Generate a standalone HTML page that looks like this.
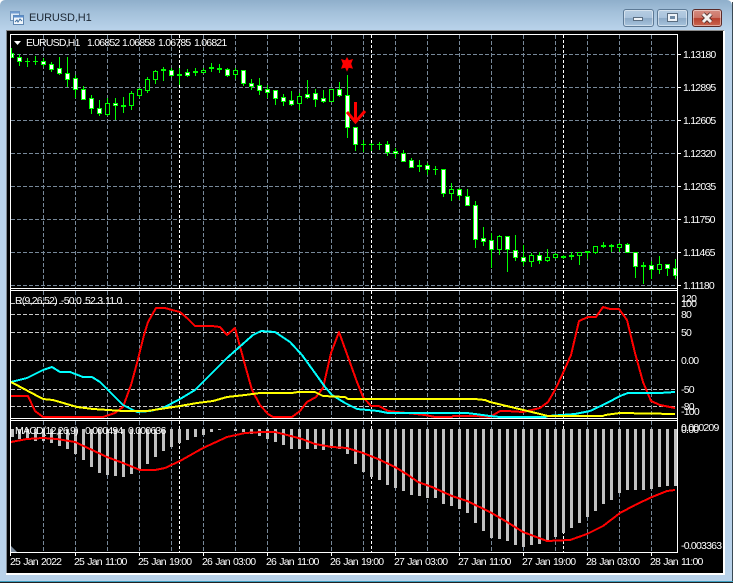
<!DOCTYPE html>
<html>
<head>
<meta charset="utf-8">
<title>EURUSD,H1</title>
<style>
html,body{margin:0;padding:0;background:#fff;}
body{width:735px;height:584px;overflow:hidden;position:relative;}
#win{position:absolute;left:0;top:0;width:732px;height:582px;border-radius:5px 5px 0 0;background:linear-gradient(#8fafcb 0,#a3c0da 12px,#b9d2ea 30px,#b9d2ea 100%);}
#edgeR{position:absolute;left:732px;top:2px;width:1px;height:580px;background:#3a4a55;}
#edgeB{position:absolute;left:0;top:581px;width:733px;height:1px;background:#3d9fc0;}
#edgeB2{position:absolute;left:0;top:582px;width:733px;height:1px;background:#222;}
#ttl{position:absolute;left:29px;top:11px;font:11px/14px "Liberation Sans",sans-serif;color:#1c2733;letter-spacing:-.1px;}
.btn{position:absolute;top:9px;height:16px;border:1px solid #5d7a96;border-radius:3px;box-shadow:inset 0 0 0 1px rgba(255,255,255,.45);background:linear-gradient(#b6cde2 0,#a9c3dc 48%,#8caac6 52%,#a8c4de 100%);}
#chart{position:absolute;left:0;top:0;}
</style>
</head>
<body>
<div id="win"></div>
<div id="edgeR"></div>
<div id="edgeB"></div>
<div id="edgeB2"></div>
<svg style="position:absolute;left:9px;top:10px" width="16" height="16" viewBox="0 0 16 16">
<rect x="1.5" y="1.5" width="9" height="9" fill="#dce9f6" stroke="#6f93b8"/>
<rect x="1.5" y="1.5" width="9" height="2" fill="#6f9bd0"/>
<rect x="4.5" y="5.5" width="10" height="9" fill="#f2f7fc" stroke="#5f86b0"/>
<rect x="4.5" y="5.5" width="10" height="2" fill="#5a8dcc"/>
<path d="M6 12l2-2 1 2 2-3 2 2" fill="none" stroke="#3f6f9f"/>
</svg>
<div id="ttl">EURUSD,H1</div>
<div class="btn" style="left:623px;width:29px;">
<div style="position:absolute;left:9px;top:7px;width:8px;height:2px;background:#eef3f8;border:1px solid #5a6d80;"></div>
</div>
<div class="btn" style="left:657px;width:29px;">
<div style="position:absolute;left:10px;top:4px;width:5px;height:3px;border:2px solid #eef3f8;outline:1px solid #5a6d80;background:#6f8aa5;"></div>
</div>
<div class="btn" style="left:692px;width:28px;border-color:#5a2a28;background:linear-gradient(#d68c80 0,#cc7466 48%,#b8402e 52%,#c96650 100%);">
<svg width="28" height="16" style="position:absolute;left:0;top:0"><path d="M10 4l8 8M18 4l-8 8" stroke="#4a2a28" stroke-width="4.5"/><path d="M10 4l8 8M18 4l-8 8" stroke="#f4f0ee" stroke-width="3"/></svg>
</div>

<svg id="chart" width="735" height="584" viewBox="0 0 735 584" xmlns="http://www.w3.org/2000/svg">
<rect x="6" y="30" width="718" height="544" fill="#000"/>
<path d="M6 30.5H724" stroke="#8a8a8a" fill="none"/>
<path d="M6.5 30V574" stroke="#808890" fill="none"/>
<rect x="723" y="31" width="2" height="544" fill="#fff"/>
<rect x="6" y="573" width="719" height="2" fill="#fff"/>

<g fill="none" shape-rendering="crispEdges">
<!-- vertical grid -->
<path stroke="#778899" stroke-dasharray="4 2" d="M43.5 35V288M75.5 35V288M107.5 35V288M139.5 35V288M171.5 35V288M203.5 35V288M235.5 35V288M267.5 35V288M299.5 35V288M331.5 35V288M363.5 35V288M395.5 35V288M427.5 35V288M459.5 35V288M491.5 35V288M523.5 35V288M555.5 35V288M587.5 35V288M619.5 35V288M651.5 35V288
M43.5 291V418M75.5 291V418M107.5 291V418M139.5 291V418M171.5 291V418M203.5 291V418M235.5 291V418M267.5 291V418M299.5 291V418M331.5 291V418M363.5 291V418M395.5 291V418M427.5 291V418M459.5 291V418M491.5 291V418M523.5 291V418M555.5 291V418M587.5 291V418M619.5 291V418M651.5 291V418
M43.5 421V552M75.5 421V552M107.5 421V552M139.5 421V552M171.5 421V552M203.5 421V552M235.5 421V552M267.5 421V552M299.5 421V552M331.5 421V552M363.5 421V552M395.5 421V552M427.5 421V552M459.5 421V552M491.5 421V552M523.5 421V552M555.5 421V552M587.5 421V552M619.5 421V552M651.5 421V552"/>
<!-- horizontal grid main -->
<path stroke="#778899" stroke-dasharray="4 2" d="M11 54.5H677M11 87.5H677M11 120.5H677M11 153.5H677M11 186.5H677M11 219.5H677M11 252.5H677M11 285.5H677"/>
<!-- horizontal levels rsi -->
<path stroke="#c8c8c8" stroke-dasharray="4 2" d="M11 303.5H677M11 314.5H677M11 332.5H677M11 360.5H677M11 389.5H677M11 406.5H677"/>
<!-- period separators -->
<path stroke="#fff" stroke-dasharray="3 2" d="M179.5 35V288M371.5 35V288M563.5 35V288M179.5 291V418M371.5 291V418M563.5 291V418M179.5 421V552M371.5 421V552M563.5 421V552"/>

<!-- macd bars -->
<path stroke="#c0c0c0" stroke-width="3" d="M12.5 429V437M19.5 429V439M27.5 429V440M35.5 429V441M43.5 429V441M51.5 429V443M59.5 429V446M67.5 429V449M75.5 429V454M83.5 429V460M91.5 429V467M99.5 429V473M107.5 429V475M115.5 429V476M123.5 429V477M131.5 429V474M139.5 429V469M147.5 429V464M155.5 429V457M163.5 429V451M171.5 429V447M179.5 429V443M187.5 429V440M195.5 429V437M203.5 429V435M211.5 429V432M219.5 429V430M235.5 429V431M243.5 429V432M251.5 429V434M259.5 429V436M267.5 429V439M275.5 429V442M283.5 429V445M291.5 429V449M299.5 429V449M307.5 429V449M315.5 429V449M323.5 429V450M331.5 429V448M339.5 429V449M347.5 429V454M355.5 429V464M363.5 429V472M371.5 429V477M379.5 429V480M387.5 429V485M395.5 429V488M403.5 429V491M411.5 429V495M419.5 429V496M427.5 429V498M435.5 429V498M443.5 429V504M451.5 429V506M459.5 429V509M467.5 429V513M475.5 429V523M483.5 429V531M491.5 429V538M499.5 429V539M507.5 429V541M515.5 429V545M523.5 429V547M531.5 429V545M539.5 429V544M547.5 429V541M555.5 429V537M563.5 429V533M571.5 429V528M579.5 429V523M587.5 429V517M595.5 429V511M603.5 429V504M611.5 429V500M619.5 429V493M627.5 429V490M635.5 429V490M643.5 429V490M651.5 429V489M659.5 429V487M667.5 429V486M675.5 429V486"/>

<!-- candles -->
<path stroke="#00ff00" d="M11.5 48V58M19.5 54V66M27.5 58V67M35.5 56V65M43.5 58V67M51.5 62V72M59.5 57V75M67.5 57V87M75.5 75V98M83.5 86V100M91.5 95V114M99.5 100V116M107.5 98V116M115.5 98V120M123.5 97V113M131.5 91V110M139.5 88V98M147.5 77V93M155.5 70V84M163.5 67V81M171.5 68V77M179.5 68V85M187.5 69V77M195.5 68V76M203.5 68V73M211.5 63V72M219.5 64V73M227.5 68V77M235.5 68V79M243.5 70V86M251.5 79V90M259.5 78V95M267.5 85V98M275.5 90V105M283.5 94V106M291.5 91V106M299.5 93V110M307.5 80V99M315.5 89V107M323.5 90V103M331.5 89V102M339.5 82V97M347.5 75V138M355.5 127V151M363.5 140V152M371.5 143V151M379.5 142V150M387.5 141V156M395.5 148V158M403.5 150V162M411.5 158V168M419.5 160V172M427.5 163V175M435.5 166V175M443.5 169V197M451.5 183V201M459.5 188V200M467.5 189V206M475.5 201V248M483.5 227V246M491.5 233V268M499.5 235V255M507.5 236V272M515.5 235V261M523.5 245V266M531.5 253V267M539.5 252V264M547.5 249V262M555.5 253V259M563.5 255V259M571.5 252V260M579.5 252V265M587.5 251V259M595.5 246V254M603.5 242V248M611.5 244V252M619.5 243V252M627.5 243V253M635.5 252V278M643.5 262V284M651.5 261V279M659.5 256V274M667.5 264V276M675.5 259V279
M25 61.5h5M33 61.5h5M361 144.5h5M369 144.5h5M377 144.5h5M433 169.5h5"/>
<path stroke="#00ff00" stroke-width="2" d="M121 106h5M161 70h5M177 75h5M193 72h5M209 68h5M217 69h5M417 166h5M561 257h5M569 256h5M585 252h5M601 246h5M609 246h5M641 266h5"/>
<path stroke="#00ff00" fill="#fff" d="M11.500 53.500h2v4h-2zM17.500 57.500h4v4h-4zM41.500 61.500h4v3h-4zM49.500 64.500h4v5h-4zM57.500 68.500h4v5h-4zM65.500 73.500h4v6h-4zM73.500 78.500h4v11h-4zM81.500 89.500h4v10h-4zM89.500 98.500h4v10h-4zM97.500 108.500h4v5h-4zM113.500 103.500h4v2h-4zM169.500 70.500h4v5h-4zM185.500 72.500h4v3h-4zM225.500 69.500h4v6h-4zM241.500 70.500h4v13h-4zM249.500 83.500h4v3h-4zM257.500 85.500h4v5h-4zM265.500 89.500h4v3h-4zM273.500 90.500h4v8h-4zM281.500 97.500h4v4h-4zM289.500 100.500h4v4h-4zM305.500 94.500h4v3h-4zM313.500 93.500h4v6h-4zM321.500 98.500h4v3h-4zM337.500 89.500h4v6h-4zM345.500 95.500h4v32h-4zM353.500 127.500h4v17h-4zM385.500 144.500h4v8h-4zM393.500 151.500h4v2h-4zM401.500 153.500h4v8h-4zM409.500 160.500h4v7h-4zM425.500 165.500h4v4h-4zM441.500 169.500h4v24h-4zM457.500 189.500h4v6h-4zM465.500 196.500h4v9h-4zM473.500 205.500h4v34h-4zM481.500 238.500h4v3h-4zM489.500 240.500h4v9h-4zM505.500 236.500h4v13h-4zM513.500 250.500h4v7h-4zM521.500 257.500h4v4h-4zM537.500 255.500h4v5h-4zM625.500 244.500h4v8h-4zM633.500 252.500h4v14h-4zM649.500 265.500h4v4h-4zM665.500 264.500h4v4h-4zM673.500 268.500h3v7h-3z"/>
<path stroke="#00ff00" fill="#000" d="M105.500 103.500h4v11h-4zM129.500 93.500h4v12h-4zM137.500 89.500h4v6h-4zM145.500 79.500h4v11h-4zM153.500 71.500h4v8h-4zM201.500 70.500h4v2h-4zM233.500 70.500h4v4h-4zM297.500 96.500h4v7h-4zM329.500 89.500h4v12h-4zM449.500 189.500h4v4h-4zM497.500 236.500h4v13h-4zM529.500 255.500h4v6h-4zM545.500 257.500h4v3h-4zM553.500 254.500h4v3h-4zM577.500 252.500h4v3h-4zM593.500 246.500h4v6h-4zM617.500 244.500h4v3h-4zM657.500 264.500h4v5h-4z"/>

<!-- rsi lines -->
<g stroke-width="2" stroke-linejoin="round">
<polyline stroke="#ff0000" points="11,396 28,396 35,411 43,417 103,417 115,413 123,407 131,385 137,363 144,335 148,322 156,308 165,308 172,310 180,312 187,318 195,326 212,326 220,327 227,335 235,328 245,365 252,390 260,405 268,414 273,417 292,417 300,411 307,402 316,397 323,388 331,353 339,332 348,357 357,382 363,397 371,406 379,406 388,411 425,415 435,417 452,417 453,416 475,416 490,417 500,411 507,411 523,412 540,408 548,402 555,390 563,373 571,355 579,321 588,317 596,317 603,307 610,309 619,309 627,320 635,353 643,382 651,401 660,405 675,408"/>
<polyline stroke="#00ffff" points="11,382 27,378 43,370 52,367 60,372 70,372 83,377 92,377 100,382 108,390 123,405 137,412 150,411 163,408 180,399 195,390 210,375 227,358 245,342 253,335 261,331 275,332 290,342 302,355 315,373 325,387 332,395 345,403 357,409 378,411 388,413 467,413 475,414 490,416 500,417 545,417 548,416 575,414 590,411 607,403 620,396 628,393 660,393 675,392"/>
<polyline stroke="#ffff00" points="11,382 43,399 53,400 77,407 93,409 123,411 147,411 180,406 197,403 213,401 227,397 245,395 260,393 292,393 298,392 315,392 323,396 345,397 348,399 475,399 485,400 490,402 540,414 548,416 603,416 605,415 620,413 675,414"/>
<!-- macd signal -->
<polyline stroke="#ff0000" points="11,442 27,439 43,438 57,439 75,442 90,449 107,457 123,463 140,470 155,470 165,468 180,461 203,448 227,437 245,433 262,432 275,432 287,435 302,439 315,444 332,447 347,448 363,453 378,459 395,467 408,475 418,482 432,487 452,496 467,501 490,512 507,522 523,532 547,541 570,540 587,534 603,526 620,513 635,505 652,497 667,491 675,490"/>
</g>

<!-- frames -->
<path stroke="#fff" d="M10.500 34.500H677.500V552.500H10.500ZM10.500 288.500H677.500M10.500 290.500H677.500M10.500 418.500H677.500M10.500 420.500H677.500"/>
<!-- ticks -->
<path stroke="#fff" d="M678 54.500h3M678 87.500h3M678 120.500h3M678 153.500h3M678 186.500h3M678 219.500h3M678 252.500h3M678 285.500h3M75.500 553v3M139.500 553v3M203.500 553v3M267.500 553v3M331.500 553v3M395.500 553v3M459.500 553v3M523.500 553v3M587.500 553v3M651.500 553v3M10.500 553v3"/>
</g>

<!-- objects -->
<path fill="#778899" d="M11 546l6 6h-6z"/>
<path fill="#fff" d="M14 41h7l-3.500 4z"/>
<path fill="#ff0000" d="M347 57l1.800 3.200 4.200-1.200-1.800 4.800 1.800 5-4.200-1-1.800 4-1.800-4-4.200 1 1.800-5-1.800-4.800 4.200 1.200z"/>
<g fill="none" stroke="#ff0000" stroke-width="3">
<path d="M355.500 102V121"/>
<path d="M347 112L355.500 122L365 111"/>
</g>

<!-- text -->
<g font-family="'Liberation Sans',sans-serif" font-size="10.500" fill="#fff" style="letter-spacing:-.78px;word-spacing:1px">
<text x="26" y="46">EURUSD,H1</text>
<text x="87" y="46">1.06852</text>
<text x="122" y="46">1.06858</text>
<text x="158" y="46">1.06785</text>
<text x="194" y="46">1.06821</text>
<text x="15" y="304">R(9,26,52)</text>
<text x="61" y="304">-50.0</text>
<text x="85" y="304">52.3</text>
<text x="105" y="304">11.0</text>
<text x="15" y="434">MACD(12,26,9)</text>
<text x="85" y="434">0.000494</text>
<text x="128" y="434">0.000636</text>
<text x="683" y="58">1.13180</text>
<text x="683" y="91">1.12895</text>
<text x="683" y="124">1.12605</text>
<text x="683" y="157">1.12320</text>
<text x="683" y="190">1.12035</text>
<text x="683" y="223">1.11750</text>
<text x="683" y="256">1.11465</text>
<text x="683" y="289">1.11180</text>
<text x="681" y="302">120</text>
<text x="681" y="307">100</text>
<text x="681" y="318">80</text>
<text x="681" y="336">50</text>
<text x="681" y="364">0.00</text>
<text x="681" y="393">-50</text>
<text x="681" y="410">-80</text>
<text x="681" y="415">-100</text>
<text x="681" y="433">0.00</text>
<text x="681" y="431">0.000209</text>
<text x="681" y="549">-0.003363</text>
<text x="10" y="565">25 Jan 2022</text>
<text x="74" y="565">25 Jan 11:00</text>
<text x="138" y="565">25 Jan 19:00</text>
<text x="202" y="565">26 Jan 03:00</text>
<text x="266" y="565">26 Jan 11:00</text>
<text x="330" y="565">26 Jan 19:00</text>
<text x="394" y="565">27 Jan 03:00</text>
<text x="458" y="565">27 Jan 11:00</text>
<text x="522" y="565">27 Jan 19:00</text>
<text x="586" y="565">28 Jan 03:00</text>
<text x="650" y="565">28 Jan 11:00</text>
</g>
</svg>
</body>
</html>
